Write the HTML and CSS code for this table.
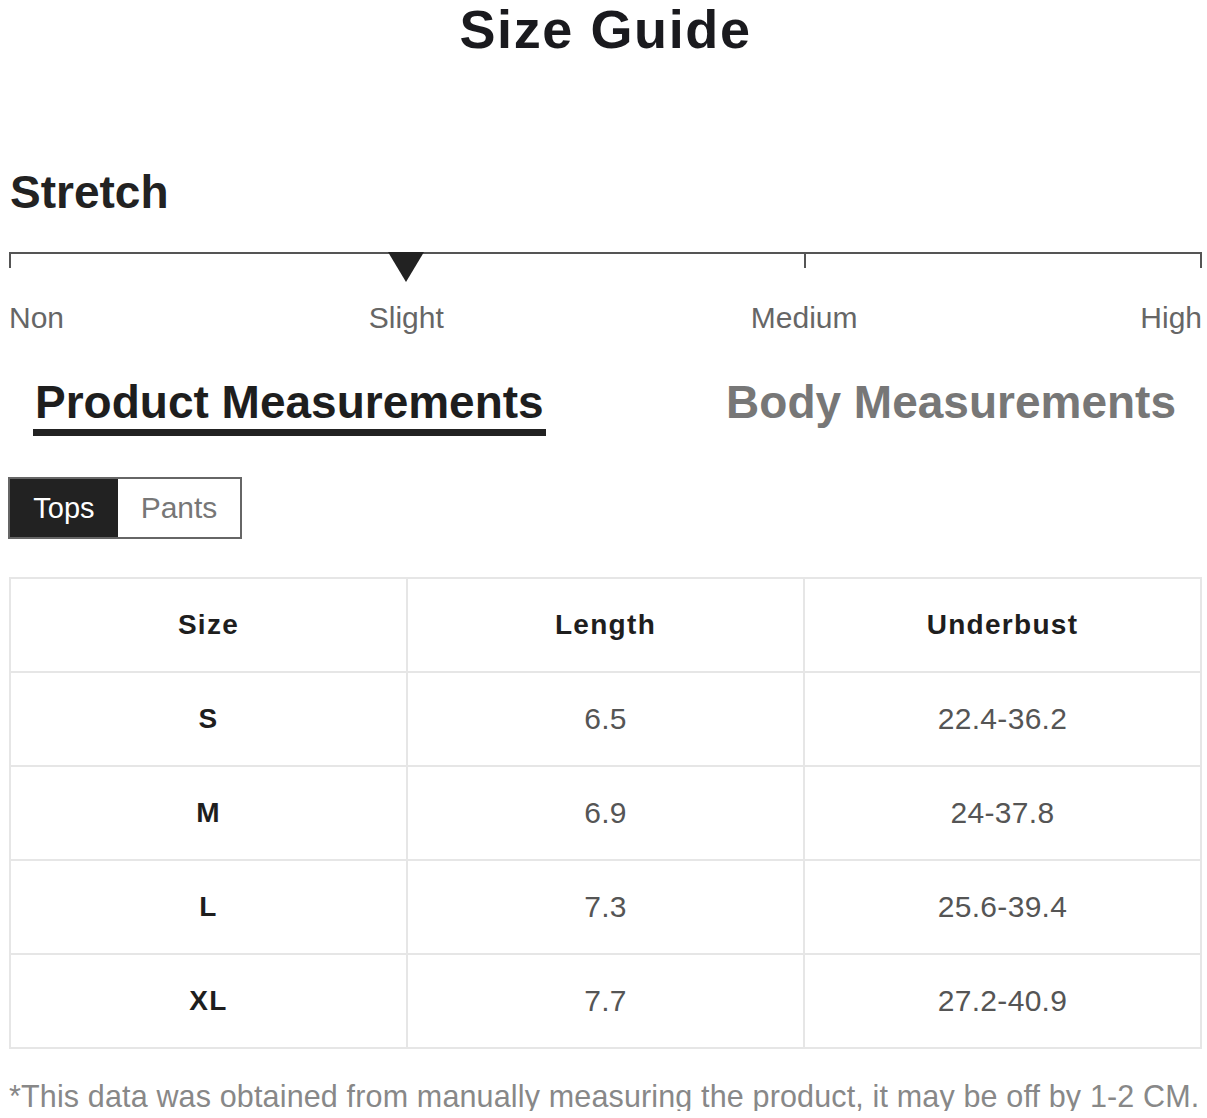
FILE: index.html
```html
<!DOCTYPE html>
<html lang="en">
<head>
<meta charset="utf-8">
<title>Size Guide</title>
<link rel="stylesheet" href="styles.css">
</head>
<body>
<div class="page">
  <h1 class="title">Size Guide</h1>

  <h2 class="stretch-title">Stretch</h2>
  <div class="scale">
    <div class="scale-seg seg-a"></div>
    <div class="scale-seg seg-b"></div>
    <span class="marker" style="left: 33.3%"></span>
  </div>
  <div class="scale-labels">
    <span class="lbl lbl-start">Non</span>
    <span class="lbl lbl-mid" style="left: 33.3%">Slight</span>
    <span class="lbl lbl-mid" style="left: 66.65%">Medium</span>
    <span class="lbl lbl-end">High</span>
  </div>

  <div class="tabs">
    <span class="tab active">Product Measurements</span>
    <span class="tab">Body Measurements</span>
  </div>

  <div class="toggle">
    <span class="toggle-btn on">Tops</span>
    <span class="toggle-btn">Pants</span>
  </div>

  <table class="chart">
    <thead>
      <tr><th>Size</th><th>Length</th><th>Underbust</th></tr>
    </thead>
    <tbody>
      <tr><th>S</th><td>6.5</td><td>22.4-36.2</td></tr>
      <tr><th>M</th><td>6.9</td><td>24-37.8</td></tr>
      <tr><th>L</th><td>7.3</td><td>25.6-39.4</td></tr>
      <tr><th>XL</th><td>7.7</td><td>27.2-40.9</td></tr>
    </tbody>
  </table>

  <p class="note">*This data was obtained from manually measuring the product, it may be off by 1-2 CM.</p>
</div>
</body>
</html>
```

FILE: styles.css
```css
* { box-sizing: border-box; }
html, body { margin: 0; padding: 0; background: #fff; }
body { font-family: "Liberation Sans", Arial, sans-serif; color: #222; }

.page {
  width: 1207px;
  padding: 3px 5px 0 9px;
}

.title {
  margin: 0;
  text-align: center;
  font-size: 54px;
  line-height: 52px;
  font-weight: 900;
  letter-spacing: 1.6px;
  color: #1a1a1e;
}

.stretch-title {
  margin: 115px 0 0 1px;
  font-size: 46px;
  line-height: 44px;
  font-weight: 700;
  color: #222;
}

.scale {
  position: relative;
  display: flex;
  margin-top: 38px;
  height: 16px;
}
.scale-seg {
  border-top: 2px solid #555;
  border-left: 2px solid #555;
  height: 16px;
}
.seg-a { width: 795px; }
.seg-b { flex: 1; border-right: 2px solid #555; }

.marker {
  position: absolute;
  top: 0;
  width: 0;
  height: 0;
  margin-left: -18px;
  border-left: 18px solid transparent;
  border-right: 18px solid transparent;
  border-top: 30px solid #222;
}

.scale-labels {
  position: relative;
  height: 30px;
  margin-top: 35px;
  font-size: 30px;
  line-height: 30px;
  color: #666;
}
.lbl { position: absolute; top: 0; white-space: nowrap; }
.lbl-start { left: 0; }
.lbl-mid { transform: translateX(-50%); }
.lbl-end { right: 0; }

.tabs {
  display: flex;
  justify-content: space-between;
  margin-top: 46px;
  padding: 0 24px 0 24px;
}
.tab {
  font-size: 46px;
  line-height: 46px;
  font-weight: 700;
  color: #777;
  padding: 0 2px 4px;
  border-bottom: 7px solid transparent;
}
.tab.active {
  color: #1e1e1e;
  border-bottom-color: #222;
}

.toggle {
  display: inline-flex;
  margin: 41px 0 0 -1px;
  border: 2px solid #666;
  height: 62px;
}
.toggle-btn {
  display: flex;
  align-items: center;
  justify-content: center;
  font-size: 30px;
  color: #777;
  background: #fff;
}
.toggle-btn.on {
  width: 108px;
  background: #222;
  color: #fff;
  font-size: 29px;
}
.toggle-btn:not(.on) { width: 122px; }

.chart {
  width: 1193px;
  margin-top: 38px;
  border-collapse: collapse;
  table-layout: fixed;
}
.chart th, .chart td {
  border: 2px solid #e6e6e6;
  height: 94px;
  padding: 0;
  text-align: center;
  vertical-align: middle;
}
.chart th {
  font-size: 28px;
  font-weight: 700;
  letter-spacing: 1.3px;
  color: #1e1e1e;
}
.chart td {
  font-size: 30px;
  letter-spacing: 0.3px;
  color: #555;
}

.note {
  margin: 32px 0 0 0;
  font-size: 30.5px;
  line-height: 30px;
  letter-spacing: 0.15px;
  color: #888;
  white-space: nowrap;
}
```
